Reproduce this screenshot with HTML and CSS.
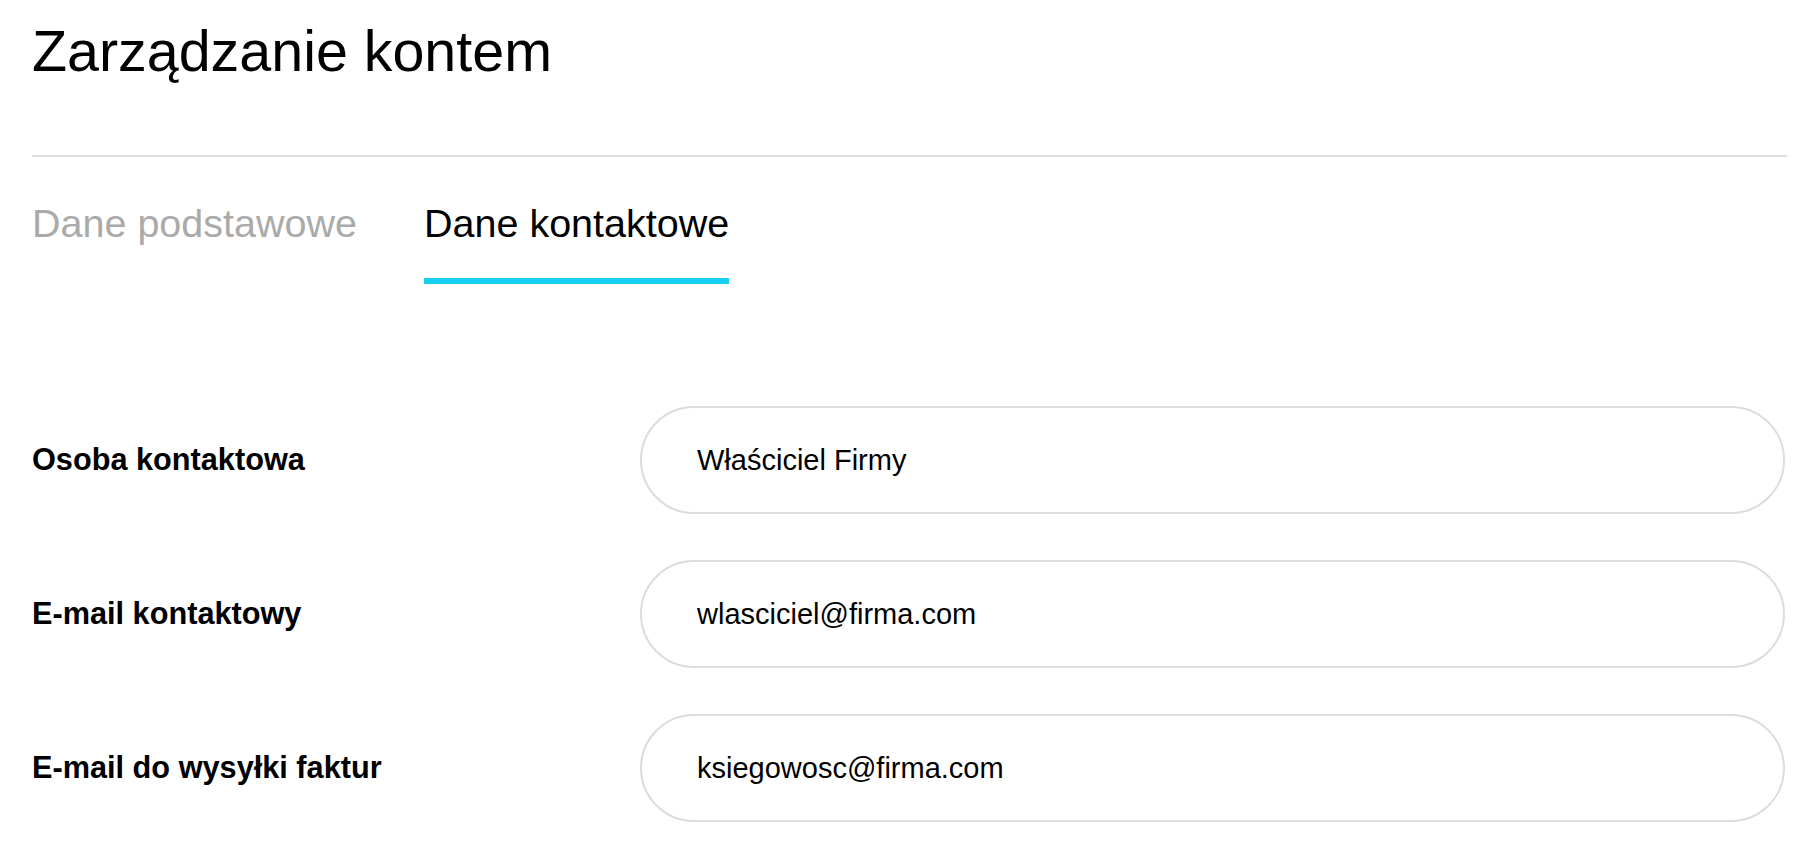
FILE: index.html
```html
<!DOCTYPE html>
<html lang="pl">
<head>
  <meta charset="UTF-8" />
  <title>Zarządzanie kontem</title>
  <link rel="stylesheet" href="styles.css">
</head>
<body>
  <div class="page">
    <h1>Zarządzanie kontem</h1>
    <hr class="divider">

    <div class="tabs">
      <a class="tab" href="#">Dane podstawowe</a>
      <a class="tab active" href="#">Dane kontaktowe</a>
    </div>

    <form class="contact-form">
      <div class="row">
        <label for="person">Osoba kontaktowa</label>
        <input id="person" type="text" value="Właściciel Firmy">
      </div>
      <div class="row">
        <label for="email">E-mail kontaktowy</label>
        <input id="email" type="text" value="wlasciciel@firma.com">
      </div>
      <div class="row">
        <label for="invoice">E-mail do wysyłki faktur</label>
        <input id="invoice" type="text" value="ksiegowosc@firma.com">
      </div>
    </form>
  </div>
</body>
</html>
```

FILE: styles.css
```css
body {
  margin: 0;
  background: #fff;
  color: #000;
  font-family: "Liberation Sans", Arial, sans-serif;
}
.page {
  padding: 0 17px 0 32px;
}
h1 {
  margin: 17px 0 0;
  font-size: 57.4px;
  font-weight: 400;
  line-height: 1.2;
}
.divider {
  margin: 69px 0 0;
  border: 0;
  height: 2px;
  background: #dedede;
}
.tabs {
  display: flex;
  gap: 67px;
  margin-top: 43px;
}
.tab {
  font-size: 39.5px;
  line-height: 1.2;
  color: #aaa;
  text-decoration: none;
  padding-bottom: 31px;
  border-bottom: 6px solid transparent;
}
.tab.active {
  color: #000;
  border-bottom-color: #17d0f1;
}
.contact-form {
  margin-top: 122px;
  padding-right: 2px;
  display: flex;
  flex-direction: column;
  gap: 46px;
}
.row {
  display: grid;
  grid-template-columns: 608px 1fr;
  align-items: center;
}
.row label {
  font-size: 30.7px;
  font-weight: 700;
}
.row input {
  box-sizing: border-box;
  height: 108px;
  width: 100%;
  margin: 0;
  padding: 0 20px 0 55px;
  border: 2px solid #dcdcdc;
  border-radius: 54px;
  font-family: "Liberation Sans", Arial, sans-serif;
  font-size: 29px;
  color: #000;
  background: #fff;
  outline: none;
}
```
